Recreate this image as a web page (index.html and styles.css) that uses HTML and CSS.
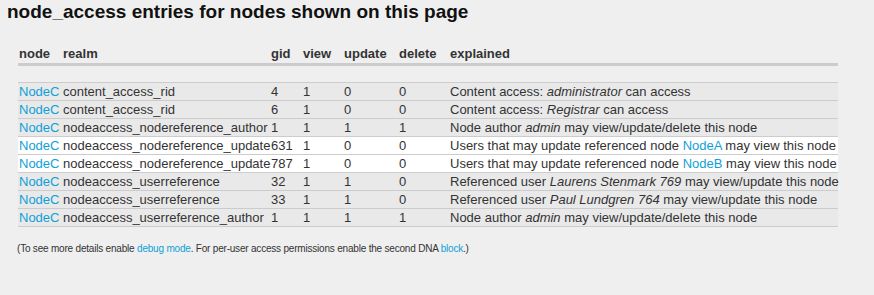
FILE: index.html
```html
<!doctype html>
<html lang="en">
<head>
<meta charset="utf-8" />
<title>node_access entries</title>
<link rel="stylesheet" href="styles.css">
</head>
<body>
  <div class="devel">
    <h2 class="title">node_access entries for nodes shown on this page</h2>

    <table class="grants">
      <colgroup>
        <col class="c-node"><col class="c-realm"><col class="c-gid"><col class="c-view">
        <col class="c-update"><col class="c-delete"><col class="c-expl">
      </colgroup>
      <thead>
        <tr><th>node</th><th>realm</th><th>gid</th><th>view</th><th>update</th><th>delete</th><th>explained</th></tr>
      </thead>
      <tbody>
        <tr class="spacer"><td colspan="7"></td></tr>
        <tr><td><a href="#">NodeC</a></td><td>content_access_rid</td><td>4</td><td>1</td><td>0</td><td>0</td><td>Content access: <em>administrator</em> can access</td></tr>
        <tr><td><a href="#">NodeC</a></td><td>content_access_rid</td><td>6</td><td>1</td><td>0</td><td>0</td><td>Content access: <em>Registrar</em> can access</td></tr>
        <tr><td><a href="#">NodeC</a></td><td>nodeaccess_nodereference_author</td><td>1</td><td>1</td><td>1</td><td>1</td><td>Node author <em>admin</em> may view/update/delete this node</td></tr>
        <tr class="hl"><td><a href="#">NodeC</a></td><td>nodeaccess_nodereference_update</td><td>631</td><td>1</td><td>0</td><td>0</td><td>Users that may update referenced node <a href="#">NodeA</a> may view this node</td></tr>
        <tr class="hl"><td><a href="#">NodeC</a></td><td>nodeaccess_nodereference_update</td><td>787</td><td>1</td><td>0</td><td>0</td><td>Users that may update referenced node <a href="#">NodeB</a> may view this node</td></tr>
        <tr><td><a href="#">NodeC</a></td><td>nodeaccess_userreference</td><td>32</td><td>1</td><td>1</td><td>0</td><td>Referenced user <em>Laurens Stenmark 769</em> may view/update this node</td></tr>
        <tr><td><a href="#">NodeC</a></td><td>nodeaccess_userreference</td><td>33</td><td>1</td><td>1</td><td>0</td><td>Referenced user <em>Paul Lundgren 764</em> may view/update this node</td></tr>
        <tr><td><a href="#">NodeC</a></td><td>nodeaccess_userreference_author</td><td>1</td><td>1</td><td>1</td><td>1</td><td>Node author <em>admin</em> may view/update/delete this node</td></tr>
      </tbody>
    </table>

    <p class="note">(To see more details enable <a href="#">debug mode</a>. For per-user access permissions enable the second DNA <a href="#">block</a>.)</p>
  </div>
</body>
</html>
```

FILE: styles.css
```css
:root{
  --bg:#efefef;
  --row:#e9e9e9;
  --line:#cccccc;
  --text:#333333;
  --link:#0fa0d8;
}

*{margin:0;padding:0;box-sizing:border-box}
body{
  background:var(--bg);
  color:var(--text);
  font-family:"Liberation Sans",Arial,sans-serif;
  font-size:13px;
}

.devel{padding:0 7px;}

/* === title === */
.title{
  font-size:19px;font-weight:bold;color:#111;
  line-height:24px;
}

/* === grants table === */
.grants{
  margin:21px 0 0 11px;
  width:820px;table-layout:fixed;
  border-collapse:collapse;
}
.c-node{width:44px}
.c-realm{width:208px}
.c-gid{width:32px}
.c-view{width:41px}
.c-update{width:55px}
.c-delete{width:51px}
.c-expl{width:389px}

.grants th{
  text-align:left;font-weight:bold;
  height:18px;line-height:18px;padding:0 1px;
  border-bottom:3px solid var(--line);
  white-space:nowrap;
}
.grants td{
  height:18px;line-height:17px;padding:0 1px;
  background:var(--row);
  border-bottom:1px solid var(--line);
  white-space:nowrap;overflow:visible;
}
.grants .spacer td{background:transparent;}
.grants tr.hl td{background:#fff;}

a{color:var(--link);text-decoration:none;}
em{font-style:italic;}

/* === footer note === */
.note{
  margin:15px 0 0 10px;
  font-size:10px;line-height:14px;letter-spacing:-0.2px;
}
```
